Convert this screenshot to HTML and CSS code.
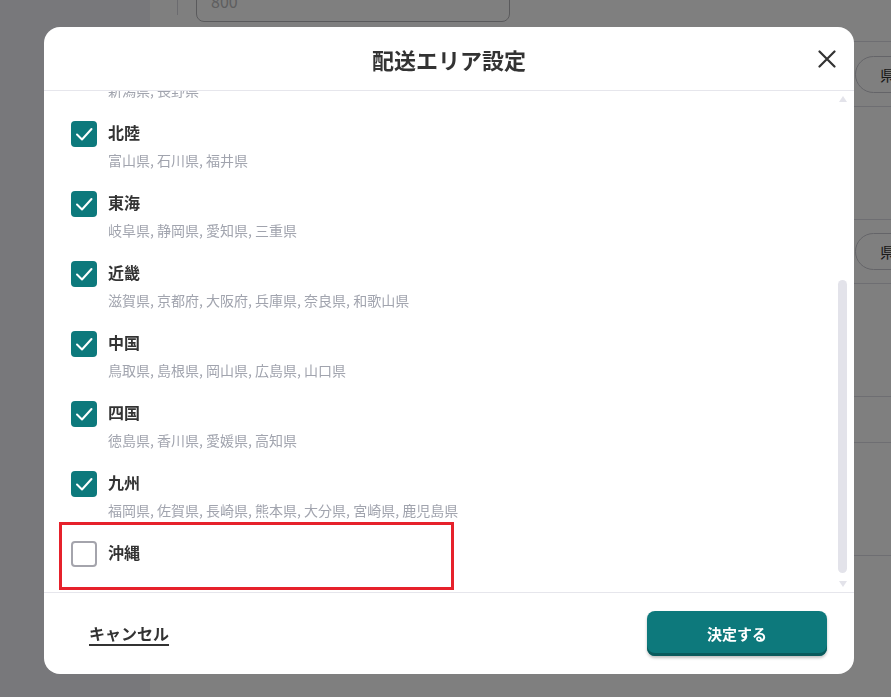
FILE: index.html
```html
<!DOCTYPE html>
<html lang="ja">
<head>
    <meta charset="UTF-8">
    <meta name="viewport" content="width=device-width, initial-scale=1.0">
    <title>配送エリア設定</title>
    <link rel="stylesheet" href="styles.css">
</head>
<body>

    <div class="page">
        <aside class="sidebar"></aside>
        <main class="main">
            <div class="price-row">
                <div class="price-box">
                    <div class="price-input">800</div>
                </div>
            </div>
            <div class="zone-row zone-row-pill"><span class="pill">県</span></div>
            <div class="zone-row zone-row-tall"></div>
            <div class="zone-row zone-row-pill"><span class="pill">県</span></div>
            <div class="zone-row zone-row-tall"></div>
            <div class="zone-row zone-row-short"></div>
            <div class="zone-row zone-row-tall"></div>
            <div class="zone-row"></div>
        </main>
    </div>

    <div class="overlay">
        <div class="modal">
            <header class="modal-header">
                <h2>配送エリア設定</h2>
                <button class="close-btn" aria-label="閉じる">
                    <svg width="18" height="18" viewBox="0 0 18 18">
                        <path d="M1.5 1.5 L16.5 16.5 M16.5 1.5 L1.5 16.5" stroke="#333" stroke-width="2.2" stroke-linecap="round" fill="none"/>
                    </svg>
                </button>
            </header>

            <div class="modal-body" id="areaList">
                <ul class="area-list">
                    <li class="area-item">
                        <div class="area-row"><span class="box checked"><svg viewBox="0 0 26 26"><path d="M6 13.5 L11 18.5 L20.5 8"/></svg></span><span class="area-name">北海道</span></div>
                        <p class="area-prefs">北海道</p>
                    </li>
                    <li class="area-item">
                        <div class="area-row"><span class="box checked"><svg viewBox="0 0 26 26"><path d="M6 13.5 L11 18.5 L20.5 8"/></svg></span><span class="area-name">東北</span></div>
                        <p class="area-prefs">青森県, 岩手県, 宮城県, 秋田県, 山形県, 福島県</p>
                    </li>
                    <li class="area-item">
                        <div class="area-row"><span class="box checked"><svg viewBox="0 0 26 26"><path d="M6 13.5 L11 18.5 L20.5 8"/></svg></span><span class="area-name">関東</span></div>
                        <p class="area-prefs">茨城県, 栃木県, 群馬県, 埼玉県, 千葉県, 東京都, 神奈川県</p>
                    </li>
                    <li class="area-item">
                        <div class="area-row"><span class="box checked"><svg viewBox="0 0 26 26"><path d="M6 13.5 L11 18.5 L20.5 8"/></svg></span><span class="area-name">信越</span></div>
                        <p class="area-prefs">新潟県, 長野県</p>
                    </li>
                    <li class="area-item">
                        <div class="area-row"><span class="box checked"><svg viewBox="0 0 26 26"><path d="M6 13.5 L11 18.5 L20.5 8"/></svg></span><span class="area-name">北陸</span></div>
                        <p class="area-prefs">富山県, 石川県, 福井県</p>
                    </li>
                    <li class="area-item">
                        <div class="area-row"><span class="box checked"><svg viewBox="0 0 26 26"><path d="M6 13.5 L11 18.5 L20.5 8"/></svg></span><span class="area-name">東海</span></div>
                        <p class="area-prefs">岐阜県, 静岡県, 愛知県, 三重県</p>
                    </li>
                    <li class="area-item">
                        <div class="area-row"><span class="box checked"><svg viewBox="0 0 26 26"><path d="M6 13.5 L11 18.5 L20.5 8"/></svg></span><span class="area-name">近畿</span></div>
                        <p class="area-prefs">滋賀県, 京都府, 大阪府, 兵庫県, 奈良県, 和歌山県</p>
                    </li>
                    <li class="area-item">
                        <div class="area-row"><span class="box checked"><svg viewBox="0 0 26 26"><path d="M6 13.5 L11 18.5 L20.5 8"/></svg></span><span class="area-name">中国</span></div>
                        <p class="area-prefs">鳥取県, 島根県, 岡山県, 広島県, 山口県</p>
                    </li>
                    <li class="area-item">
                        <div class="area-row"><span class="box checked"><svg viewBox="0 0 26 26"><path d="M6 13.5 L11 18.5 L20.5 8"/></svg></span><span class="area-name">四国</span></div>
                        <p class="area-prefs">徳島県, 香川県, 愛媛県, 高知県</p>
                    </li>
                    <li class="area-item">
                        <div class="area-row"><span class="box checked"><svg viewBox="0 0 26 26"><path d="M6 13.5 L11 18.5 L20.5 8"/></svg></span><span class="area-name">九州</span></div>
                        <p class="area-prefs">福岡県, 佐賀県, 長崎県, 熊本県, 大分県, 宮崎県, 鹿児島県</p>
                    </li>
                    <li class="area-item">
                        <div class="area-row"><span class="box"></span><span class="area-name">沖縄</span></div>
                    </li>
                </ul>
            </div>

            <div class="scroll-rail">
                <span class="arrow-up"></span>
                <span class="rail-space"></span>
                <span class="thumb"></span>
                <span class="arrow-down"></span>
            </div>

            <footer class="modal-footer">
                <a href="#" class="cancel-link">キャンセル</a>
                <button class="submit-btn">決定する</button>
            </footer>

            <div class="highlight"></div>
        </div>
    </div>

    <script>
        var list = document.getElementById('areaList');
        list.scrollTop = list.scrollHeight;
    </script>

</body>
</html>
```

FILE: styles.css
```css
* {
    box-sizing: border-box;
}

body {
    margin: 0;
    padding: 0;
    font-family: "Noto Sans CJK JP", "Noto Sans", sans-serif;
    color: #333;
    background-color: #fff;
    overflow: hidden;
}

/* page behind the modal */

.page {
    display: flex;
    height: 100vh;
}

.sidebar {
    width: 150px;
    flex-shrink: 0;
    background-color: #f0f0f6;
}

.main {
    flex: 1;
    display: flex;
    flex-direction: column;
    overflow: hidden;
}

.price-row {
    height: 41px;
    flex-shrink: 0;
}

.price-box {
    margin-left: 27px;
    height: 41px;
    padding-left: 18px;
    border-left: 1px solid #d6d6de;
}

.price-input {
    width: 314px;
    height: 48px;
    margin-top: -26px;
    padding: 16px 14px 0;
    border: 1px solid #b4b4b8;
    border-radius: 8px;
    font-size: 16px;
    line-height: 20px;
    color: #bcbcc0;
}

.zone-row {
    flex-shrink: 0;
    border-top: 1px solid #dcdce4;
    display: flex;
    align-items: center;
}

.zone-row-pill {
    height: 65px;
}

.zone-row-pill + .zone-row-tall + .zone-row-pill {
    height: 64px;
}

.zone-row-tall {
    height: 113px;
}

.zone-row-short {
    height: 46px;
}

.pill {
    margin-left: 705px;
    height: 37px;
    padding: 0 24px;
    border: 1px solid #c8c8d0;
    border-radius: 19px;
    display: flex;
    align-items: center;
    font-size: 15px;
    color: #333;
    white-space: nowrap;
}

/* modal */

.overlay {
    position: fixed;
    inset: 0;
    background-color: rgba(0, 0, 0, 0.5);
    padding: 27px 37px 23px 44px;
    display: flex;
}

.modal {
    flex: 1;
    position: relative;
    display: flex;
    flex-direction: column;
    background-color: #fff;
    border-radius: 16px;
    overflow: hidden;
}

.modal-header {
    height: 64px;
    flex-shrink: 0;
    display: grid;
    grid-template-columns: 1fr auto 1fr;
    align-items: center;
    border-bottom: 1px solid #e6e6ec;
}

.modal-header h2 {
    grid-column: 2;
    margin: 0;
    font-size: 22px;
    font-weight: bold;
    color: #333;
    line-height: 1;
}

.close-btn {
    grid-column: 3;
    justify-self: end;
    margin-right: 18px;
    padding: 0;
    width: 18px;
    height: 18px;
    border: none;
    background: none;
    cursor: pointer;
    display: flex;
}

.modal-body {
    flex: 1;
    overflow-y: auto;
    scrollbar-width: none;
}

.modal-body::-webkit-scrollbar {
    display: none;
}

/* drawn scrollbar, lies over the right edge of the list */
.scroll-rail {
    position: absolute;
    top: 64px;
    right: 4px;
    width: 15px;
    height: 501px;
    padding: 5px 0;
    display: flex;
    flex-direction: column;
    align-items: center;
    pointer-events: none;
}

.arrow-up {
    width: 0;
    height: 0;
    border-left: 4.5px solid transparent;
    border-right: 4.5px solid transparent;
    border-bottom: 6px solid #e3e3ea;
}

.arrow-down {
    width: 0;
    height: 0;
    margin-top: 8px;
    border-left: 4.5px solid transparent;
    border-right: 4.5px solid transparent;
    border-top: 6px solid #e3e3ea;
}

.rail-space {
    flex: 1;
}

.thumb {
    width: 9px;
    height: 293px;
    border-radius: 5px;
    background-color: #e3e3ea;
}

.area-list {
    list-style: none;
    margin: 0;
    padding: 40px 0 25px 27px;
    display: flex;
    flex-direction: column;
    gap: 19px;
}

.area-row {
    display: flex;
    align-items: center;
    gap: 11px;
    height: 27px;
}

.box {
    width: 26px;
    height: 26px;
    border: 2px solid #a4a4ac;
    border-radius: 4px;
    background-color: #fff;
    flex-shrink: 0;
}

.box.checked {
    border: none;
    background-color: #0d797c;
}

.box svg {
    display: block;
    width: 26px;
    height: 26px;
}

.box svg path {
    fill: none;
    stroke: #fff;
    stroke-width: 2;
    stroke-linecap: round;
    stroke-linejoin: round;
}

.area-name {
    font-size: 16px;
    font-weight: bold;
    color: #333;
    line-height: 1;
    padding-bottom: 3px;
}

.area-prefs {
    margin: 3px 0 0 37px;
    font-size: 14px;
    line-height: 21px;
    color: #a1a4ae;
    white-space: nowrap;
}

.modal-footer {
    height: 82px;
    flex-shrink: 0;
    display: flex;
    align-items: center;
    justify-content: space-between;
    padding: 0 27px 0 45px;
    border-top: 1px solid #e6e6ec;
}

.cancel-link {
    font-size: 16px;
    font-weight: bold;
    color: #333;
    text-decoration: underline;
    text-decoration-thickness: 2px;
    text-underline-offset: 4px;
    padding-bottom: 2px;
}

.submit-btn {
    width: 180px;
    height: 45px;
    border: none;
    border-radius: 8px;
    background-color: #0d797c;
    color: #fff;
    font-family: inherit;
    font-size: 15px;
    font-weight: bold;
    box-shadow: inset 0 -3px 0 #095a5c, 0 2px 3px rgba(0, 0, 0, 0.25);
    cursor: pointer;
}

.highlight {
    position: absolute;
    left: 15px;
    top: 495px;
    width: 395px;
    height: 68px;
    border: 3px solid #e6212b;
    pointer-events: none;
}
```
